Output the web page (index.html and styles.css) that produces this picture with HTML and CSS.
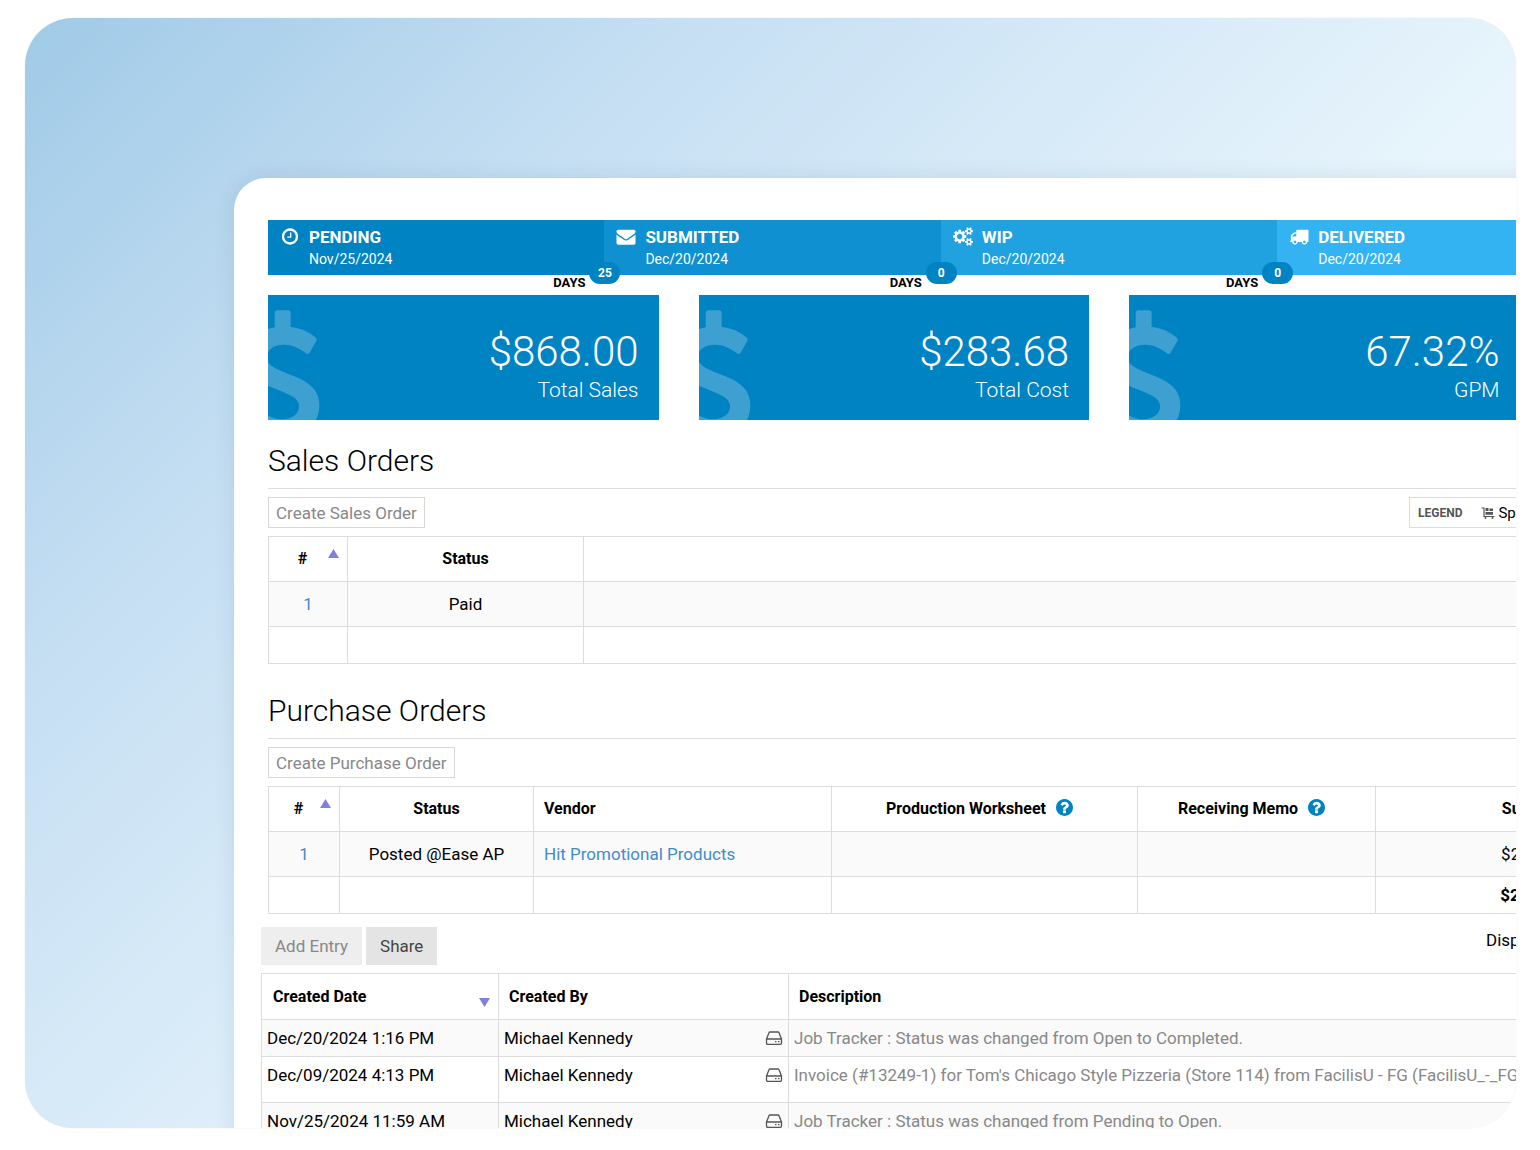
FILE: index.html
```html
<!DOCTYPE html>
<html lang="en">
<head>
<meta charset="utf-8">
<title>Job Overview</title>
<meta name="viewport" content="width=device-width, initial-scale=1">
<link rel="stylesheet" href="styles.css">
</head>
<body>
<svg class="sprite" aria-hidden="true">
  <symbol id="i-clock" viewBox="0 0 1792 1792"><path d="M1024 544v448q0 14-9 23t-23 9h-320q-14 0-23-9t-9-23v-64q0-14 9-23t23-9h224v-352q0-14 9-23t23-9h64q14 0 23 9t9 23zm416 352q0-148-73-273t-198-198-273-73-273 73-198 198-73 273 73 273 198 198 273 73 273-73 198-198 73-273zm224 0q0 209-103 385.5t-279.5 279.5-385.5 103-385.5-103-279.5-279.5-103-385.5 103-385.5 279.5-279.5 385.5-103 385.5 103 279.5 279.5 103 385.5z"/></symbol>
  <symbol id="i-mail" viewBox="0 0 1792 1792"><path d="M1792 710v794q0 66-47 113t-113 47h-1472q-66 0-113-47t-47-113v-794q44 49 101 87 362 246 497 345 57 42 92.5 65.5t94.5 48 110 24.5h2q51 0 110-24.5t94.5-48 92.5-65.5q170-123 498-345 57-39 100-87zm0-294q0 79-49 151t-122 123q-376 261-468 325-10 7-42.5 31t-54 38.5-52 32.5-57.5 27-50 9h-2q-23 0-50-9t-57.5-27-52-32.5-54-38.5-42.5-31q-91-64-262-182.5t-205-142.5q-62-42-117-115.5t-55-136.5q0-78 41.5-130t118.5-52h1472q65 0 112.5 47t47.5 113z"/></symbol>
  <symbol id="i-gears" viewBox="0 0 1920 1792"><path d="M896 896q0-106-75-181t-181-75-181 75-75 181 75 181 181 75 181-75 75-181zm768 512q0-52-38-90t-90-38-90 38-38 90q0 53 37.5 90.5t90.5 37.5 90.5-37.5 37.5-90.5zm0-1024q0-52-38-90t-90-38-90 38-38 90q0 53 37.5 90.5t90.5 37.5 90.5-37.5 37.5-90.5zm-384 421v185q0 10-7 19.5t-16 10.5l-155 24q-11 35-32 76 34 48 90 115 7 11 7 20 0 12-7 19-23 30-82.5 89.5t-78.5 59.5q-11 0-21-7l-115-90q-37 19-77 31-11 108-23 155-7 24-30 24h-186q-11 0-20-7.5t-10-17.5l-23-153q-34-10-75-31l-118 89q-7 7-20 7-11 0-21-8-144-133-144-160 0-9 7-19 10-14 41-53t47-61q-23-44-35-82l-152-24q-10-1-17-9.5t-7-19.5v-185q0-10 7-19.5t16-10.5l155-24q11-35 32-76-34-48-90-115-7-11-7-20 0-12 7-20 22-30 82-89t79-59q11 0 21 7l115 90q34-18 77-32 11-108 23-154 7-24 30-24h186q11 0 20 7.5t10 17.5l23 153q34 10 75 31l118-89q8-7 20-7 11 0 21 8 144 133 144 160 0 8-7 19-12 16-42 54t-45 60q23 48 34 82l152 23q10 2 17 10.5t7 19.5zm640 533v140q0 16-149 31-12 27-30 52 51 113 51 138 0 4-4 7-122 71-124 71-8 0-46-47t-52-68q-20 2-30 2t-30-2q-14 21-52 68t-46 47q-2 0-124-71-4-3-4-7 0-25 51-138-18-25-30-52-149-15-149-31v-140q0-16 149-31 13-29 30-52-51-113-51-138 0-4 4-7 4-2 35-20t59-34 30-16q8 0 46 46.5t52 67.5q20-2 30-2t30 2q51-71 92-112l6-2q4 0 124 70 4 3 4 7 0 25-51 138 17 23 30 52 149 15 149 31zm0-1024v140q0 16-149 31-12 27-30 52 51 113 51 138 0 4-4 7-122 71-124 71-8 0-46-47t-52-68q-20 2-30 2t-30-2q-14 21-52 68t-46 47q-2 0-124-71-4-3-4-7 0-25 51-138-18-25-30-52-149-15-149-31v-140q0-16 149-31 13-29 30-52-51-113-51-138 0-4 4-7 4-2 35-20t59-34 30-16q8 0 46 46.5t52 67.5q20-2 30-2t30 2q51-71 92-112l6-2q4 0 124 70 4 3 4 7 0 25-51 138 17 23 30 52 149 15 149 31z"/></symbol>
  <symbol id="i-truck" viewBox="0 0 1792 1792"><path d="M640 1408q0-52-38-90t-90-38-90 38-38 90 38 90 90 38 90-38 38-90zm-384-512h384v-256h-158q-13 0-22 9l-195 195q-9 9-9 22v30zm1280 512q0-52-38-90t-90-38-90 38-38 90 38 90 90 38 90-38 38-90zm256-1088v1024q0 15-4 26.5t-13.5 18.5-16.5 11.5-23.5 6-22.5 2-25.5 0-22.5-.5q0 106-75 181t-181 75-181-75-75-181h-384q0 106-75 181t-181 75-181-75-75-181h-64q-3 0-22.5.5t-25.5 0-22.5-2-23.5-6-16.5-11.5-13.5-18.5-4-26.5q0-26 19-45t45-19v-320q0-8-.5-35t0-38 2.5-34.5 6.5-37 14-30.5 22.5-30l198-198q19-19 50.5-32t58.5-13h160v-192q0-26 19-45t45-19h1024q26 0 45 19t19 45z"/></symbol>
  <symbol id="i-help" viewBox="128 128 1536 1536"><path d="M1024 1376v-192q0-14-9-23t-23-9h-192q-14 0-23 9t-9 23v192q0 14 9 23t23 9h192q14 0 23-9t9-23zm256-672q0-88-55.5-163t-138.5-116-170-41q-243 0-371 213-15 24 8 42l132 100q7 6 19 6 16 0 25-12 53-68 86-92 34-24 86-24 48 0 85.5 26t37.5 59q0 38-20 61t-68 45q-63 28-115.5 86.5t-52.5 125.5v36q0 14 9 23t23 9h192q14 0 23-9t9-23q0-19 21.5-49.5t54.5-49.5q32-18 49-28.5t46-35 44.5-48 28-60.5 12.5-81zm384 192q0 209-103 385.5t-279.5 279.5-385.5 103-385.5-103-279.5-279.5-103-385.5 103-385.5 279.5-279.5 385.5-103 385.5 103 279.5 279.5 103 385.5z"/></symbol>
  <symbol id="i-dollar" viewBox="0 0 1024 1792"><path d="M978 1185q0 153-99.5 263.5T620 1585v175q0 14-9 23t-23 9H453q-13 0-22.5-9.5T421 1760v-175q-66-9-127.5-31t-101.5-44.5-74-48-46.5-37.5-17.5-18q-17-21-2-41l103-135q7-10 23-12 15-2 24 9l2 2q113 99 243 125 37 8 74 8 81 0 142.5-43t61.5-122q0-28-15-53t-33.5-42-58.5-37.5-66-32-80-32.5q-39-16-61.5-25t-61.5-26.5-62.5-31-56.5-35.5-53.5-42.5-43.5-49-35.5-58-21-66.5-8.5-78q0-138 98-242t255-134V32q0-13 9.500-22.500T453 0h135q14 0 23 9t9 23v176q57 6 110.500 23t87 33.500 63.500 37.500 39 29 15 14q17 18 5 38l-81 146q-8 15-23 16-14 3-27-7-3-3-14.500-12t-39-26.500-58.500-32-74.500-26T537 430q-95 0-155 43t-60 111q0 26 8.500 48t29.500 41.500 39.500 33 56 31 60.500 27 70 27.500q53 20 81 31.500t76 35 75.500 42.500 62 50 53 63.500 31.500 76.500 13 94z"/></symbol>
  <symbol id="i-drive" viewBox="0 0 18 16"><path d="M1.500 9 4 2.700Q4.300 2 5 2h8q.7 0 1 .7L16.500 9v4q0 1.300-1.300 1.300H2.800Q1.500 14.300 1.500 13zM1.500 9h15" fill="none" stroke="#555" stroke-width="1.300" stroke-linejoin="round"/><path d="M10 11.600h1.500M13 11.600h1.500" stroke="#555" stroke-width="1.300"/></symbol>
  <symbol id="i-cart" viewBox="0 0 14 12"><path d="M.5 1H3v8.500h10.500" fill="none" stroke="#555" stroke-width="1.200"/><path d="M4.500 1h3v3h-3zM8.500 1.500H12V4H8.500zM4.500 5H12v2.800H4.500z" fill="#555"/><circle cx="4.500" cy="11" r="1" fill="#555"/><circle cx="11.500" cy="11" r="1" fill="#555"/></symbol>
  <symbol id="i-up" viewBox="0 0 11 9"><path d="M5.500 0 11 9H0z"/></symbol>
  <symbol id="i-down" viewBox="0 0 11 9"><path d="M5.500 9 11 0H0z"/></symbol>
</svg>

<main class="stage">
  <div class="panel">
    <ol class="steps">
      <li class="step step-pending">
        <svg class="step-icon"><use href="#i-clock"/></svg>
        <div><strong class="step-name">PENDING</strong><span class="step-date">Nov/25/2024</span></div>
        <div class="lag"><span class="lag-label">DAYS</span><span class="lag-count">25</span></div>
      </li>
      <li class="step step-submitted">
        <svg class="step-icon"><use href="#i-mail"/></svg>
        <div><strong class="step-name">SUBMITTED</strong><span class="step-date">Dec/20/2024</span></div>
        <div class="lag"><span class="lag-label">DAYS</span><span class="lag-count">0</span></div>
      </li>
      <li class="step step-wip">
        <svg class="step-icon"><use href="#i-gears"/></svg>
        <div><strong class="step-name">WIP</strong><span class="step-date">Dec/20/2024</span></div>
        <div class="lag"><span class="lag-label">DAYS</span><span class="lag-count">0</span></div>
      </li>
      <li class="step step-delivered">
        <svg class="step-icon"><use href="#i-truck"/></svg>
        <div><strong class="step-name">DELIVERED</strong><span class="step-date">Dec/20/2024</span></div>
      </li>
    </ol>

    <div class="stats">
      <div class="stat"><svg class="stat-mark"><use href="#i-dollar"/></svg><span class="stat-value">$868.00</span><span class="stat-name">Total Sales</span></div>
      <div class="stat"><svg class="stat-mark"><use href="#i-dollar"/></svg><span class="stat-value">$283.68</span><span class="stat-name">Total Cost</span></div>
      <div class="stat"><svg class="stat-mark"><use href="#i-dollar"/></svg><span class="stat-value">67.32%</span><span class="stat-name">GPM</span></div>
    </div>

    <section class="orders">
      <h2>Sales Orders</h2>
      <div class="toolbar">
        <button class="btn-outline" type="button">Create Sales Order</button>
        <div class="legend"><strong>LEGEND</strong><svg class="cart"><use href="#i-cart"/></svg><span>Split</span></div>
      </div>
      <table class="grid">
        <colgroup><col class="sales-num"><col class="sales-status"><col></colgroup>
        <thead><tr><th><div class="sort"><span>#</span><svg class="arrow"><use href="#i-up"/></svg></div></th><th>Status</th><th></th></tr></thead>
        <tbody><tr><td><a href="#so-1">1</a></td><td>Paid</td><td></td></tr></tbody>
        <tfoot><tr><td></td><td></td><td></td></tr></tfoot>
      </table>
    </section>

    <section class="orders">
      <h2>Purchase Orders</h2>
      <div class="toolbar">
        <button class="btn-outline" type="button">Create Purchase Order</button>
      </div>
      <table class="grid">
        <colgroup><col class="po-num"><col class="po-status"><col class="po-vendor"><col class="po-sheet"><col class="po-memo"><col class="po-total"><col></colgroup>
        <thead><tr>
          <th><div class="sort"><span>#</span><svg class="arrow"><use href="#i-up"/></svg></div></th>
          <th>Status</th><th class="start">Vendor</th>
          <th><div class="hinted">Production Worksheet<svg class="help"><use href="#i-help"/></svg></div></th>
          <th><div class="hinted">Receiving Memo<svg class="help"><use href="#i-help"/></svg></div></th>
          <th>Subtotal</th><th></th>
        </tr></thead>
        <tbody><tr><td><a href="#po-1">1</a></td><td>Posted @Ease AP</td><td class="start"><a href="#vendor">Hit Promotional Products</a></td><td></td><td></td><td>$283.68</td><td></td></tr></tbody>
        <tfoot><tr><td></td><td></td><td></td><td></td><td></td><td>$283.68</td><td></td></tr></tfoot>
      </table>
    </section>

    <section class="log">
      <div class="log-bar">
        <button class="btn-flat btn-muted" type="button">Add Entry</button>
        <button class="btn-flat" type="button">Share</button>
        <span class="log-info">Display</span>
      </div>
      <table class="grid log-table">
        <colgroup><col class="log-date"><col class="log-user"><col></colgroup>
        <thead><tr><th><div class="sort sort-start"><span>Created Date</span><svg class="arrow"><use href="#i-down"/></svg></div></th><th class="start">Created By</th><th class="start">Description</th></tr></thead>
        <tbody>
          <tr><td>Dec/20/2024 1:16 PM</td><td><div class="user">Michael Kennedy<svg class="drive"><use href="#i-drive"/></svg></div></td><td class="note">Job Tracker : Status was changed from Open to Completed.</td></tr>
          <tr class="tall"><td>Dec/09/2024 4:13 PM</td><td><div class="user">Michael Kennedy<svg class="drive"><use href="#i-drive"/></svg></div></td><td class="note">Invoice (#13249-1) for Tom's Chicago Style Pizzeria (Store 114) from FacilisU - FG (FacilisU_-_FG)</td></tr>
          <tr><td>Nov/25/2024 11:59 AM</td><td><div class="user">Michael Kennedy<svg class="drive"><use href="#i-drive"/></svg></div></td><td class="note">Job Tracker : Status was changed from Pending to Open.</td></tr>
        </tbody>
      </table>
    </section>
  </div>
</main>
</body>
</html>
```
FILE: styles.css
```css
* { box-sizing: border-box; }

body {
  margin: 0;
  padding: 18px 24px 22px 25px;
  background: #fff;
  color: #000;
  font: 17px/20px Roboto, "Liberation Sans", sans-serif;
}

button { font: inherit; cursor: pointer; }
a { color: #428bca; text-decoration: none; }
.sprite { display: none; }

.stage {
  height: calc(100vh - 40px);
  overflow: hidden;
  border-radius: 48px;
  background: linear-gradient(135deg, #a0cae7 0%, #c6dff3 26%, #e8f5fc 60%, #f2f9fd 100%);
  box-shadow: 0 0 1px rgba(0, 0, 0, 0.2);
}

/* The panel runs on past the right edge of the stage. */
.panel {
  margin: 160px -468px 0 209px;
  padding: 42px 34px 34px;
  border-radius: 32px 0 0 0;
  background: #fff;
  box-shadow: 0 0 20px rgba(60, 100, 150, 0.14);
}

/* Status steps */
.steps {
  display: grid;
  grid-template-columns: repeat(5, 1fr);
  margin: 0;
  padding: 0;
  list-style: none;
}
.step {
  position: relative;
  display: flex;
  gap: 9px;
  height: 55px;
  padding: 7px 12px;
  color: #fff;
}
.step-pending { background: #0083c3; }
.step-submitted { background: #0f90d0; }
.step-wip { background: #20a1e0; }
.step-delivered { background: #33b3f2; }
.step-icon { width: 20px; height: 19px; fill: #fff; }
.step-name { display: block; font-size: 17px; line-height: 20px; }
.step-date { display: block; font-size: 14px; line-height: 24px; }
.lag {
  position: absolute;
  z-index: 1;
  right: -16px;
  bottom: -18px;
  display: flex;
  align-items: flex-end;
  gap: 4px;
  color: #000;
  font-size: 13px;
  font-weight: 700;
}
.lag-count {
  width: 31px;
  margin-bottom: 9px;
  border-radius: 11px;
  background: #0083c3;
  color: #fff;
  font-size: 12px;
  line-height: 22px;
  text-align: center;
}

/* Figures */
.stats {
  display: grid;
  grid-template-columns: repeat(4, 1fr);
  gap: 40px;
  margin-top: 20px;
}
.stat {
  position: relative;
  overflow: hidden;
  height: 125px;
  padding: 32px 20px 0;
  background: #0083c3;
  color: #fff;
  font-weight: 300;
  text-align: right;
}
.stat-mark {
  position: absolute;
  top: 15px;
  left: -27px;
  width: 82px;
  height: 144px;
  fill: rgba(255, 255, 255, 0.24);
}
.stat-value { display: block; font-size: 42px; line-height: 50px; }
.stat-name { display: block; font-size: 21px; line-height: 26px; }

/* Order sections */
.orders { margin-top: 19px; }
.orders + .orders { margin-top: 25px; }
h2 {
  margin: 0 0 8px;
  padding: 3px 0 8px;
  border-bottom: 1px solid #ddd;
  font-size: 30px;
  font-weight: 300;
  line-height: 38px;
}
.toolbar {
  display: flex;
  justify-content: space-between;
  margin-bottom: 8px;
}
.btn-outline {
  height: 31px;
  padding: 0 7px;
  border: 1px solid #d8d8d8;
  background: #fff;
  color: #888;
}
.legend {
  display: flex;
  align-items: center;
  width: 541px;
  height: 31px;
  padding: 0 8px;
  border: 1px solid #ddd;
  font-size: 15px;
}
.legend strong { margin-right: 19px; color: #555; font-size: 12px; }
.cart { width: 14px; height: 12px; margin-right: 3px; }

/* Tables */
.grid {
  width: 100%;
  border-collapse: collapse;
  table-layout: fixed;
  text-align: center;
}
.grid th, .grid td { padding: 0; border: 1px solid #ddd; }
.grid th { height: 45px; font-size: 16px; }
.grid tbody td { height: 45px; }
.grid tbody tr:nth-child(odd) { background: #fafafa; }
.grid tfoot td { height: 37px; font-weight: 700; }
.grid .start { padding: 0 10px; text-align: left; }
.sort { display: flex; padding: 0 8px; }
.sort span { flex: 1; }
.sort-start { padding-left: 11px; text-align: left; }
.arrow { width: 11px; height: 9px; fill: #8080e0; }
.sort-start .arrow { margin-top: 11px; }
.hinted { display: flex; justify-content: center; gap: 10px; padding-right: 10px; }
.help { width: 17px; height: 17px; fill: #0083c3; }

.sales-num { width: 79px; }
.sales-status { width: 236px; }
.po-num { width: 71px; }
.po-status { width: 194px; }
.po-vendor { width: 298px; }
.po-sheet { width: 306px; }
.po-memo { width: 238px; }
.po-total { width: 313px; }
.log-date { width: 237px; }
.log-user { width: 290px; }

/* Activity log */
.log { margin: 13px 0 0 -7px; }
.log-bar { display: flex; gap: 4px; margin-bottom: 8px; }
.btn-flat {
  height: 38px;
  padding: 0 14px;
  border: 0;
  background: #e4e4e4;
  color: #444;
}
.btn-muted { background: #eee; color: #888; }
.log-info { width: 464px; margin-left: auto; padding-top: 3px; }
.log-table { text-align: left; }
.log-table th { height: 46px; }
.log-table tbody td { height: 37px; padding: 8px 5px; vertical-align: top; }
.log-table tbody .tall td { height: 46px; }
.log-table .note { color: #888; white-space: nowrap; }
.user { display: flex; justify-content: space-between; align-items: center; }
.drive { width: 18px; height: 16px; }
```
